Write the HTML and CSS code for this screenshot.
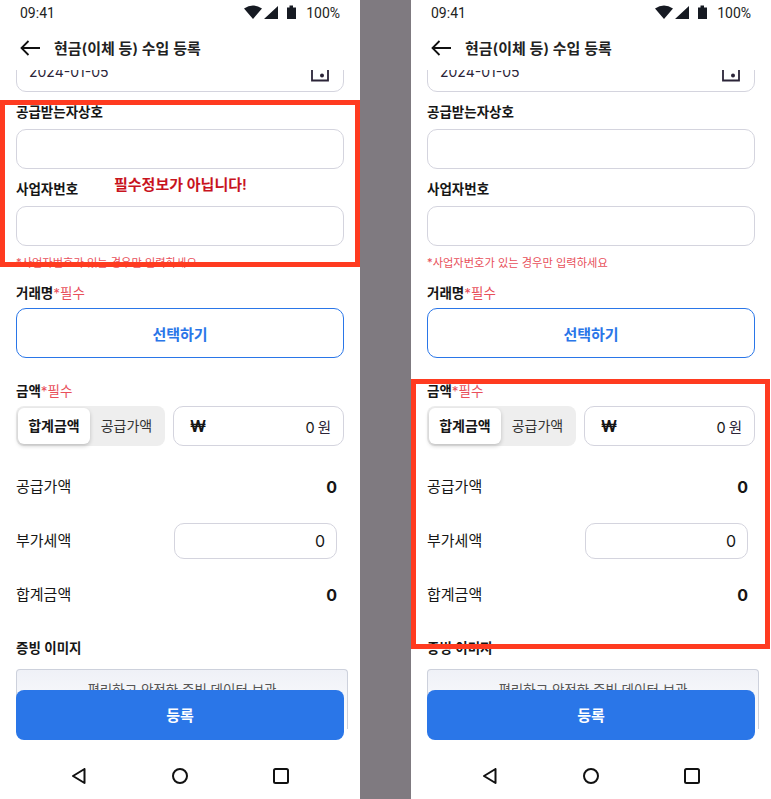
FILE: index.html
```html
<!DOCTYPE html>
<html lang="ko">
<head>
    <meta charset="UTF-8">
    <title>현금(이체 등) 수입 등록</title>
    <link rel="stylesheet" href="styles.css">
</head>
<body>
    <div class="phone">
        <div class="status-bar">
            <span>09:41</span>
            <div class="status-right">
                <svg width="52" height="15" viewBox="0 0 52 15"><path d="M0 3.5Q9-2.5 18 3.5L9 14Z M20 14L34 1V14Z M43 2.5H45.5V0.5H49V2.5H52V14H43Z"/></svg>
                <span>100%</span>
            </div>
        </div>
        <div class="app-bar">
            <svg width="20" height="16" viewBox="0 0 20 16"><path d="M20 8H1.5M8.5 1L1.5 8L8.5 15" fill="none" stroke="#111" stroke-width="1.8"/></svg>
            <h1>현금(이체 등) 수입 등록</h1>
        </div>
        <div class="content">
            <div class="input date-input">
                <span>2024-01-05</span>
                <svg width="18" height="18" viewBox="0 0 18 18"><path d="M1 2V16.5H17V2" fill="none" stroke="#2b2438" stroke-width="1.8"/><circle cx="11" cy="11.5" r="2" fill="#2b2438"/></svg>
            </div>
            <label class="field-label first-label">공급받는자상호</label>
            <div class="input"></div>
            <label class="field-label second-label">사업자번호</label>
            <div class="input"></div>
            <p class="help">*사업자번호가 있는 경우만 입력하세요</p>
            <label class="field-label deal-label">거래명<em>*필수</em></label>
            <button class="select-btn">선택하기</button>
            <label class="field-label amount-label">금액<em>*필수</em></label>
            <div class="amount-row">
                <div class="toggle">
                    <span class="toggle-item active">합계금액</span>
                    <span class="toggle-item">공급가액</span>
                </div>
                <div class="input amount-input">
                    <b>₩</b>
                    <span>0 <i>원</i></span>
                </div>
            </div>
            <div class="sum-row supply-row"><span>공급가액</span><b>0</b></div>
            <div class="sum-row"><span>부가세액</span><div class="input vat-input">0</div></div>
            <div class="sum-row"><span>합계금액</span><b>0</b></div>
            <label class="field-label proof-label">증빙 이미지</label>
            <div class="proof-box">편리하고 안전한 증빙 데이터 보관</div>
        </div>
        <button class="submit-btn">등록</button>
        <div class="nav-bar">
            <svg width="16" height="16" viewBox="0 0 16 16"><path d="M13.5 1V15L2 8Z" fill="none" stroke="#111" stroke-width="2" stroke-linejoin="round"/></svg>
            <svg width="16" height="16" viewBox="0 0 16 16"><circle cx="8" cy="8" r="7" fill="none" stroke="#111" stroke-width="2"/></svg>
            <svg width="16" height="16" viewBox="0 0 16 16"><rect x="1" y="1" width="14" height="14" rx="1.5" fill="none" stroke="#111" stroke-width="2"/></svg>
        </div>
        <div class="mark mark-left"></div>
        <div class="mark-note">필수정보가 아닙니다!</div>
    </div>

    <div class="divider"></div>

    <div class="phone">
        <div class="status-bar">
            <span>09:41</span>
            <div class="status-right">
                <svg width="52" height="15" viewBox="0 0 52 15"><path d="M0 3.5Q9-2.5 18 3.5L9 14Z M20 14L34 1V14Z M43 2.5H45.5V0.5H49V2.5H52V14H43Z"/></svg>
                <span>100%</span>
            </div>
        </div>
        <div class="app-bar">
            <svg width="20" height="16" viewBox="0 0 20 16"><path d="M20 8H1.5M8.5 1L1.5 8L8.5 15" fill="none" stroke="#111" stroke-width="1.8"/></svg>
            <h1>현금(이체 등) 수입 등록</h1>
        </div>
        <div class="content">
            <div class="input date-input">
                <span>2024-01-05</span>
                <svg width="18" height="18" viewBox="0 0 18 18"><path d="M1 2V16.5H17V2" fill="none" stroke="#2b2438" stroke-width="1.8"/><circle cx="11" cy="11.5" r="2" fill="#2b2438"/></svg>
            </div>
            <label class="field-label first-label">공급받는자상호</label>
            <div class="input"></div>
            <label class="field-label second-label">사업자번호</label>
            <div class="input"></div>
            <p class="help">*사업자번호가 있는 경우만 입력하세요</p>
            <label class="field-label deal-label">거래명<em>*필수</em></label>
            <button class="select-btn">선택하기</button>
            <label class="field-label amount-label">금액<em>*필수</em></label>
            <div class="amount-row">
                <div class="toggle">
                    <span class="toggle-item active">합계금액</span>
                    <span class="toggle-item">공급가액</span>
                </div>
                <div class="input amount-input">
                    <b>₩</b>
                    <span>0 <i>원</i></span>
                </div>
            </div>
            <div class="sum-row supply-row"><span>공급가액</span><b>0</b></div>
            <div class="sum-row"><span>부가세액</span><div class="input vat-input">0</div></div>
            <div class="sum-row"><span>합계금액</span><b>0</b></div>
            <label class="field-label proof-label">증빙 이미지</label>
            <div class="proof-box">편리하고 안전한 증빙 데이터 보관</div>
        </div>
        <button class="submit-btn">등록</button>
        <div class="nav-bar">
            <svg width="16" height="16" viewBox="0 0 16 16"><path d="M13.5 1V15L2 8Z" fill="none" stroke="#111" stroke-width="2" stroke-linejoin="round"/></svg>
            <svg width="16" height="16" viewBox="0 0 16 16"><circle cx="8" cy="8" r="7" fill="none" stroke="#111" stroke-width="2"/></svg>
            <svg width="16" height="16" viewBox="0 0 16 16"><rect x="1" y="1" width="14" height="14" rx="1.5" fill="none" stroke="#111" stroke-width="2"/></svg>
        </div>
        <div class="mark mark-right"></div>
    </div>
</body>
</html>
```

FILE: styles.css
```css
*{
    margin: 0;
    padding: 0;
    box-sizing: border-box;
}

body{
    display: flex;
    width: 771px;
    height: 799px;
    overflow: hidden;
    background-color: #fff;
    font-family: Inter, "Noto Sans CJK KR", sans-serif;
    color: #161616;
}

.phone{
    position: relative;
    display: flex;
    flex-direction: column;
    width: 360px;
    height: 799px;
    background-color: #fff;
    overflow: hidden;
}

.divider{
    width: 51px;
    background-color: #7f7a80;
}

.status-bar{
    display: flex;
    justify-content: space-between;
    align-items: center;
    height: 25px;
    padding: 0 20px;
    font-family: Roboto, sans-serif;
    font-size: 14px;
    color: #222;
}

.status-right{
    display: flex;
    align-items: center;
    gap: 10px;
}

.status-right svg{
    margin-top: -1px;
    fill: #161a22;
}

.app-bar{
    display: flex;
    align-items: center;
    gap: 14px;
    height: 45px;
    padding: 0 20px;
}

.app-bar h1{
    font-size: 15px;
    font-weight: 600;
    color: #222;
}

.content{
    flex: 1;
    padding: 0 16px;
    overflow: hidden;
}

.input{
    height: 40px;
    background-color: #fff;
    border: 1px solid #d4d4de;
    border-radius: 10px;
}

.date-input{
    display: flex;
    justify-content: space-between;
    align-items: center;
    margin-top: -18px;
    padding: 0 14px 0 12px;
    font-size: 14px;
    color: #2b2438;
}

.date-input span{
    margin-top: -1px;
}

.date-input svg{
    margin-top: 2px;
}

.field-label{
    display: block;
    font-size: 13.5px;
    font-weight: 600;
    line-height: 20px;
}

.field-label em{
    font-style: normal;
    font-weight: 400;
    font-size: 13.5px;
    color: #e8505b;
}

.first-label{
    margin-top: 10px;
    margin-bottom: 7px;
}

.second-label{
    margin-top: 10px;
    margin-bottom: 7px;
}

.help{
    margin-top: 9px;
    font-size: 11.25px;
    line-height: 16px;
    color: #e8505b;
}

.deal-label{
    margin-top: 12px;
    margin-bottom: 5px;
}

.select-btn{
    display: block;
    width: 100%;
    height: 50px;
    background-color: #fff;
    border: 1px solid #2a76e8;
    border-radius: 10px;
    font-family: inherit;
    font-size: 15px;
    font-weight: 600;
    color: #2a76e8;
}

.amount-label{
    margin-top: 23px;
    margin-bottom: 5px;
}

.amount-row{
    display: flex;
    gap: 8px;
}

.toggle{
    display: flex;
    align-items: center;
    width: 149px;
    height: 40px;
    padding: 2px;
    background-color: #eee;
    border-radius: 8px;
}

.toggle-item{
    flex: 1;
    font-size: 14px;
    line-height: 36px;
    text-align: center;
    color: #333;
}

.toggle-item.active{
    flex: none;
    width: 72px;
    background-color: #fff;
    border-radius: 6px;
    box-shadow: 0 2px 4px rgba(0, 0, 0, 0.2);
    font-weight: 600;
    color: #161616;
}

.amount-input{
    flex: 1;
    display: flex;
    justify-content: space-between;
    align-items: center;
    padding: 0 12px 0 16px;
    font-size: 14.5px;
    word-spacing: -1px;
}

.amount-input b{
    font-size: 15.5px;
}

.amount-input i{
    font-style: normal;
    color: #2b2438;
}

.sum-row{
    display: flex;
    justify-content: space-between;
    align-items: center;
    height: 36px;
    margin-top: 18px;
    padding-right: 7px;
    font-size: 15px;
    line-height: 20px;
}

.supply-row{
    margin-top: 23px;
}

.sum-row span{
    margin-top: -1px;
}

.sum-row b{
    font-size: 16px;
    font-weight: 700;
}

.vat-input{
    width: 163px;
    height: 36px;
    padding-right: 11px;
    font-size: 16px;
    line-height: 34px;
    text-align: right;
}

.proof-label{
    margin-top: 25px;
    margin-bottom: 11px;
}

.proof-box{
    width: 332px;
    height: 60px;
    padding-top: 9px;
    background: linear-gradient(#eff1f7, #fff);
    border: 1px solid #cdd1dc;
    border-bottom: none;
    border-radius: 4px 4px 0 0;
    font-size: 13.5px;
    text-align: center;
    color: #555;
}

.submit-btn{
    position: absolute;
    left: 16px;
    top: 690px;
    width: 328px;
    height: 50px;
    padding-bottom: 2px;
    background-color: #2a76e8;
    border: none;
    border-radius: 8px;
    font-family: inherit;
    font-size: 15px;
    font-weight: 600;
    color: #fff;
}

.nav-bar{
    display: flex;
    justify-content: space-between;
    align-items: center;
    height: 48px;
    padding: 2px 71px 0;
    background-color: #fff;
}

.mark{
    position: absolute;
    border: 5px solid #ff3b20;
}

.mark-left{
    left: 0;
    top: 100px;
    width: 360px;
    height: 167px;
}

.mark-right{
    left: 0;
    top: 379px;
    width: 359px;
    height: 270px;
}

.mark-note{
    position: absolute;
    left: 114px;
    top: 173px;
    font-size: 15px;
    font-weight: 600;
    color: #c8141e;
}
```
